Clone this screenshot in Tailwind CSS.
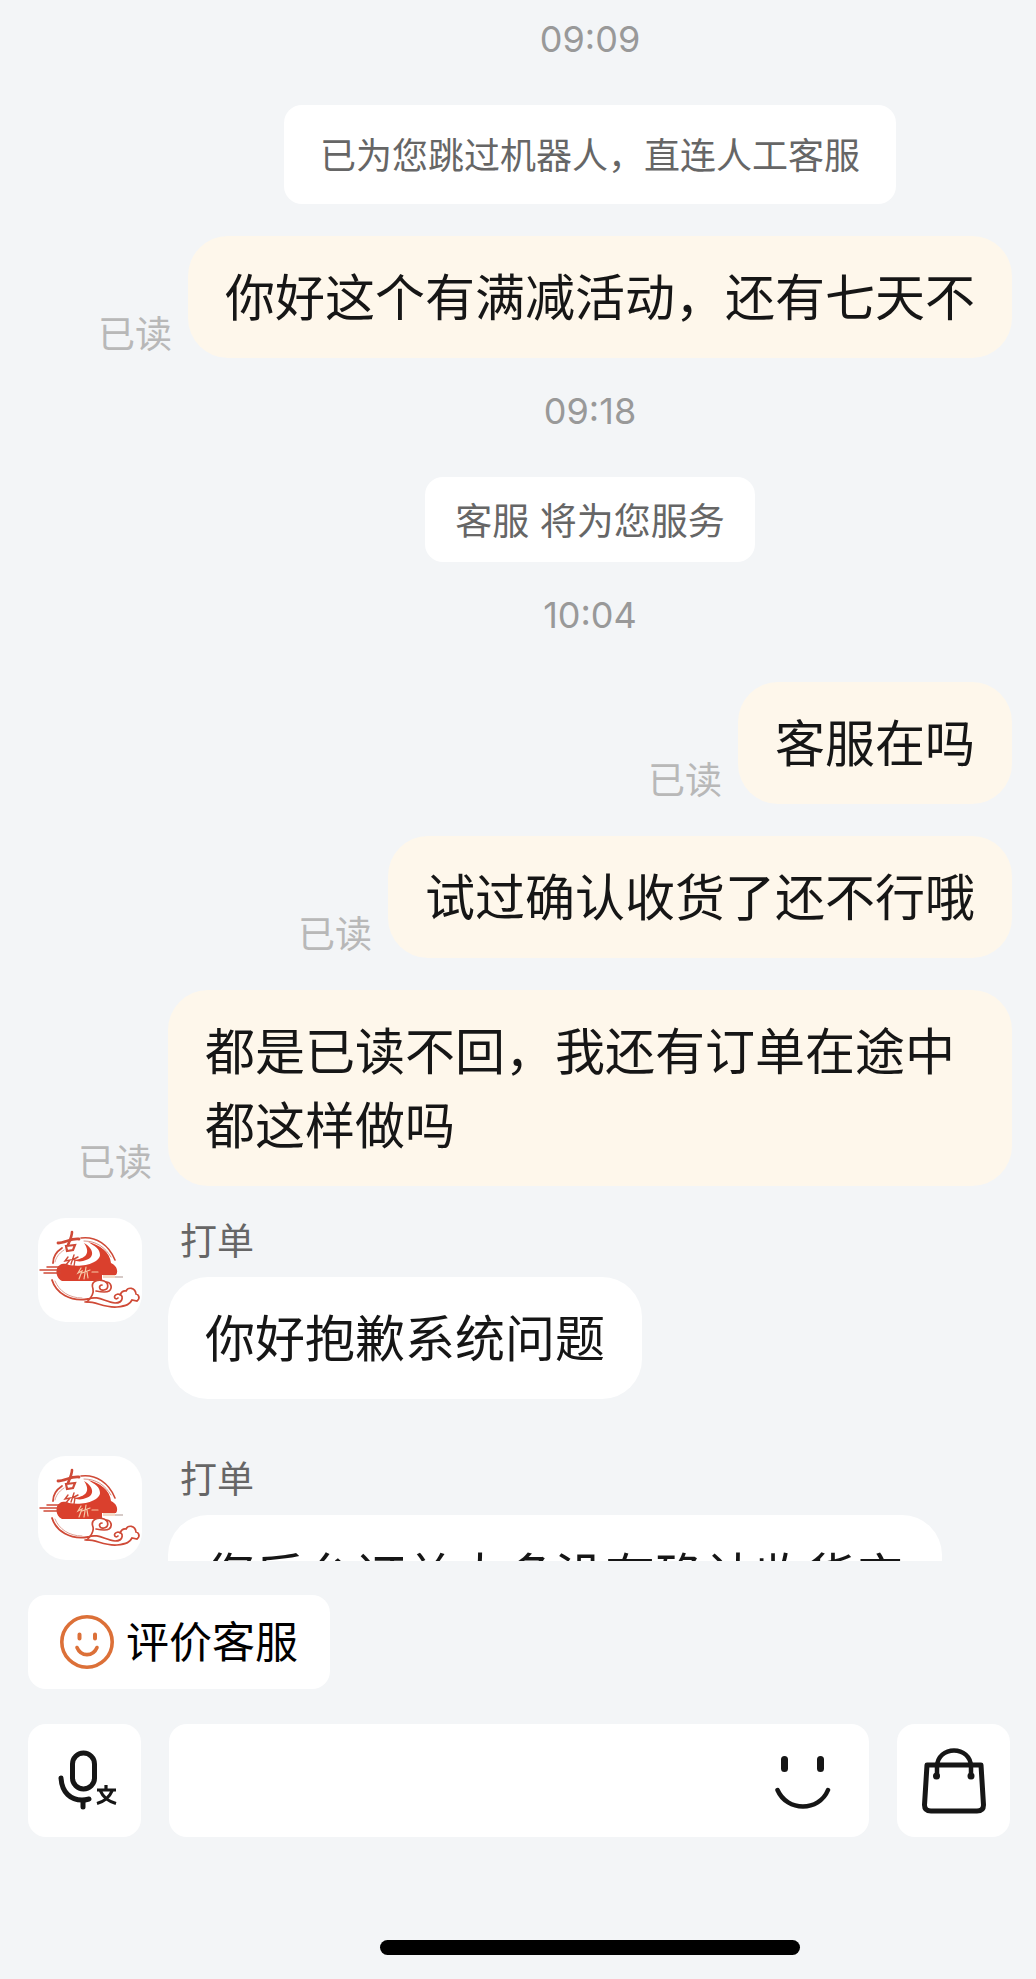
<!DOCTYPE html>
<html lang="zh-CN">
  <head>
    <meta charset="UTF-8" />
    <title>客服</title>
    <meta name="viewport" content="width=device-width, initial-scale=1.0" />
    <script src="https://cdn.jsdelivr.net/npm/@tailwindcss/browser@4"></script>
  </head>
  <body class="bg-[#f3f5f7] font-['Inter','Noto_Sans_CJK_SC',sans-serif] text-[#161616]">
    <!-- shop logo shared by the agent avatars -->
    <svg class="hidden" aria-hidden="true">
      <symbol id="shop-logo" viewBox="0 0 104 104">
        <g fill="none" stroke="#cf4a37" stroke-linecap="round">
          <path d="M24 30C18 34 15 40 15 45M14 62C18 75 32 84 50 81" stroke-width="1.8" />
          <path d="M26 32C20 36 18 40 17 44M17 63C21 73 31 80 44 80" stroke="#dfa298" stroke-width="1" />
          <path d="M43 20C58 18 71 27 77 42" stroke-width="1.6" />
          <path d="M46 23C58 23 67 29 73 39" stroke="#d98f84" stroke-width="1" />
        </g>
        <path fill="#da402d" d="M50 24C62 27 72 34 73 45C78 47 81 53 78 57H64V63H24C17 60 17 49 22 47C25 45 29 46 31 47C46 50 62 44 62 37C62 31 57 28 50 24Z" />
        <path fill="#da402d" d="M46 25C55 30 59 40 45 43C41 44 38 43 35 42C48 41 53 35 46 25Z" />
        <g fill="none" stroke="#cf4a37" stroke-linecap="round">
          <path d="M20 25C27 25 33 20 41 21" stroke-width="2.8" />
          <path d="M34 14C34 18 32 22 30 27" stroke-width="2.6" />
          <path d="M28 28L37 27L35 32L29 33Z" stroke-width="2.2" />
          <path d="M30 39L27 43L32 42L27 48M36 37L33 46M34 42L40 39M37 42L36 48" stroke-width="1.4" />
          <path d="M2 52H22M6 55H22M9 49H21" stroke-width="1.5" />
        </g>
        <g fill="none" stroke="#f6c9a8" stroke-width="1.2" stroke-linecap="round">
          <path d="M43 50L40 55L44 53L41 61M48 49L46 61M44 55L52 52M49 54L50 60M54 54L60 54" />
        </g>
        <path fill="#f3d9c6" d="M65 57H77V60H65Z" />
        <path d="M77 59H85" stroke="#c9b9b4" stroke-width="1.5" />
        <g fill="none" stroke="#cf4a37" stroke-width="1.7" stroke-linecap="round">
          <path d="M49 84C53 80 56 75 55 71C52 63 60 61 66 63C71 65 71 71 66 72C61 73 60 67 64 67" />
          <path d="M68 64C73 64 75 70 71 73C68 75 63 74 58 73" />
          <path d="M50 81C60 77 67 84 77 85C86 85 86 76 80 76C74 77 77 83 80 80" />
          <path d="M47 84C58 83 65 90 79 89C89 88 92 86 94 82L99 83C103 80 100 76 98 76C97 69 90 69 88 73C84 72 83 75 82 77" />
        </g>
      </symbol>
    </svg>

    <div class="flex min-h-screen flex-col">
      <main class="h-[1561px] overflow-hidden pt-4 pr-6 pl-[38px]">
        <div class="pl-[130px]">
          <time class="block text-center text-[36px] leading-[46px] text-[#999]">09:09</time>
          <p class="mx-auto mt-[43px] w-fit rounded-[18px] bg-white px-9 pt-1 text-[36px] leading-[95px] text-[#666]">已为您跳过机器人，直连人工客服</p>
        </div>

        <div class="mt-8 flex items-end justify-end gap-4">
          <span class="text-[37px] leading-[46px] text-[#b8b8b8]">已读</span>
          <p class="max-w-[844px] rounded-[40px] bg-[#fef7eb] px-[37px] pt-[25px] pb-[23px] text-[50px] leading-[74px]">你好这个有满减活动，还有七天不</p>
        </div>

        <div class="mt-[30px] pl-[130px]">
          <time class="block text-center text-[36px] leading-[46px] text-[#999]">09:18</time>
          <p class="mx-auto mt-[43px] w-fit rounded-[18px] bg-white px-[30px] pt-1 text-[37px] leading-[81px] text-[#666]">客服 将为您服务</p>
          <time class="mt-[30px] block text-center text-[36px] leading-[46px] text-[#999]">10:04</time>
        </div>

        <div class="mt-11 flex items-end justify-end gap-4">
          <span class="text-[37px] leading-[46px] text-[#b8b8b8]">已读</span>
          <p class="max-w-[844px] rounded-[40px] bg-[#fef7eb] px-[37px] pt-[25px] pb-[23px] text-[50px] leading-[74px]">客服在吗</p>
        </div>
        <div class="mt-8 flex items-end justify-end gap-4">
          <span class="text-[37px] leading-[46px] text-[#b8b8b8]">已读</span>
          <p class="max-w-[844px] rounded-[40px] bg-[#fef7eb] px-[37px] pt-[25px] pb-[23px] text-[50px] leading-[74px]">试过确认收货了还不行哦</p>
        </div>
        <div class="mt-8 flex items-end justify-end gap-4">
          <span class="text-[37px] leading-[46px] text-[#b8b8b8]">已读</span>
          <p class="max-w-[844px] rounded-[40px] bg-[#fef7eb] px-[37px] pt-[25px] pb-[23px] text-[50px] leading-[74px]">都是已读不回，我还有订单在途中都这样做吗</p>
        </div>

        <div class="mt-8 flex items-start gap-[26px]">
          <svg class="size-[104px] shrink-0 rounded-[28px] bg-white" role="img" aria-label="打单"><use href="#shop-logo" /></svg>
          <div>
            <h2 class="pt-px pl-3 text-[37px] leading-[46px] text-[#666]">打单</h2>
            <p class="mt-3 w-fit rounded-[40px] bg-white px-[37px] pt-[25px] pb-[23px] text-[50px] leading-[74px]">你好抱歉系统问题</p>
          </div>
        </div>
        <div class="mt-[57px] flex items-start gap-[26px]">
          <svg class="size-[104px] shrink-0 rounded-[28px] bg-white" role="img" aria-label="打单"><use href="#shop-logo" /></svg>
          <div>
            <h2 class="pt-px pl-3 text-[37px] leading-[46px] text-[#666]">打单</h2>
            <p class="mt-3 w-fit rounded-[40px] bg-white px-[37px] pt-[25px] pb-[23px] text-[50px] leading-[74px]">您后台订单大多没有确认收货产</p>
          </div>
        </div>
      </main>

      <footer class="flex grow flex-col pt-[34px] pr-[26px] pb-6 pl-7">
        <button class="flex h-[94px] items-center gap-3 self-start rounded-[18px] bg-white px-8 text-[43px] text-black">
          <svg class="size-[54px]" viewBox="0 0 54 54" fill="none" stroke="#dc7038" stroke-linecap="round">
            <circle cx="27" cy="27" r="25.2" stroke-width="3.6" />
            <path d="M19.5 19.5V23.5M35 19.5V23.5" stroke-width="4" />
            <path d="M17 32.5C21 42 33 42 37 32.5" stroke-width="3.6" />
          </svg>
          评价客服
        </button>

        <div class="mt-[35px] flex h-[113px] gap-7">
          <button class="w-[113px] shrink-0 rounded-[18px] bg-white" aria-label="语音转文字">
            <svg class="size-full" viewBox="0 0 113 113" fill="none" stroke="#161616" stroke-width="5" stroke-linecap="round">
              <rect x="44.5" y="29" width="22" height="36" rx="11" />
              <path d="M33 54C34 69 43 76 54 76C58 76 59 75.500 61 75" />
              <path d="M55 77V83" />
              <path d="M78 61V65.5M69 66H88M72.5 67C75 73 81 77.5 88 79.5M84 67C81.500 73 76 77.5 69 79.5" stroke-width="3.2" stroke-linecap="butt" />
            </svg>
          </button>
          <div class="flex min-w-0 grow items-center rounded-[18px] bg-white pr-[38px] pl-9">
            <input class="h-full min-w-0 grow text-[43px] outline-none" type="text" aria-label="消息" />
            <button class="shrink-0" aria-label="表情">
              <svg class="size-[56px]" viewBox="0 0 56 56" fill="none" stroke="#161616" stroke-linecap="round">
                <path d="M9.500 6.500V15.500M45.500 6.500V15.500" stroke-width="7" />
                <path d="M2.500 37C12 59 44 59 53 37" stroke-width="4.500" />
              </svg>
            </button>
          </div>
          <button class="w-[113px] shrink-0 rounded-[18px] bg-white" aria-label="订单">
            <svg class="size-full" viewBox="0 0 113 113" fill="none" stroke="#161616" stroke-width="5" stroke-linecap="round" stroke-linejoin="round">
              <path d="M30 41H84L86.500 81C86.500 85 84 87 80 87H34C30 87 27.500 85 27.500 81Z" />
              <path d="M40 52V43C40 21 74 21 74 43V52" stroke-width="4.500" />
              <circle cx="39.500" cy="52" r="3.500" fill="#161616" stroke="none" />
              <circle cx="74" cy="52" r="3.500" fill="#161616" stroke="none" />
            </svg>
          </button>
        </div>

        <div class="mt-auto flex justify-center pl-[142px]">
          <div class="h-[15px] w-[420px] rounded-full bg-black"></div>
        </div>
      </footer>
    </div>
  </body>
</html>
